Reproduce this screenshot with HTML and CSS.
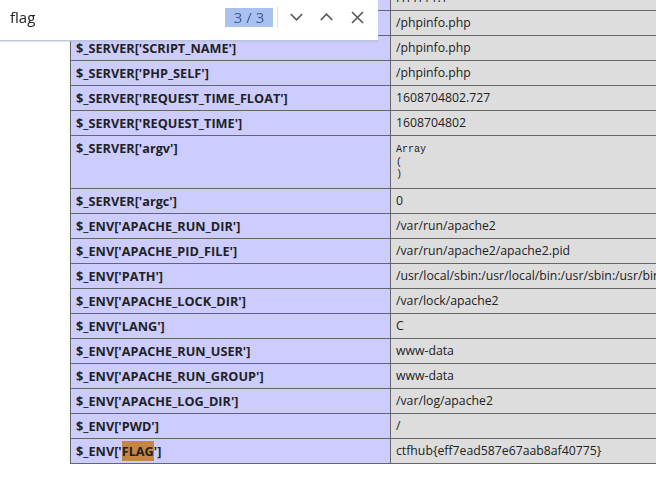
FILE: index.html
```html
<!DOCTYPE html>
<html>
<head>
<meta charset="utf-8">
<link rel="stylesheet" href="styles.css">
</head>
<body>
<div class="page">
  <table class="info">
    <tr><td class="e">$_SERVER['SERVER_PROTOCOL']</td><td class="v">HTTP/1.1</td></tr>
    <tr><td class="e">$_SERVER['REQUEST_URI']</td><td class="v">/phpinfo.php</td></tr>
    <tr><td class="e">$_SERVER['SCRIPT_NAME']</td><td class="v">/phpinfo.php</td></tr>
    <tr><td class="e">$_SERVER['PHP_SELF']</td><td class="v">/phpinfo.php</td></tr>
    <tr><td class="e">$_SERVER['REQUEST_TIME_FLOAT']</td><td class="v">1608704802.727</td></tr>
    <tr><td class="e">$_SERVER['REQUEST_TIME']</td><td class="v">1608704802</td></tr>
    <tr><td class="e">$_SERVER['argv']</td><td class="v"><pre class="dump">Array
(
)
</pre></td></tr>
    <tr><td class="e">$_SERVER['argc']</td><td class="v">0</td></tr>
    <tr><td class="e">$_ENV['APACHE_RUN_DIR']</td><td class="v">/var/run/apache2</td></tr>
    <tr><td class="e">$_ENV['APACHE_PID_FILE']</td><td class="v">/var/run/apache2/apache2.pid</td></tr>
    <tr><td class="e">$_ENV['PATH']</td><td class="v">/usr/local/sbin:/usr/local/bin:/usr/sbin:/usr/bin:/sbin:/bin</td></tr>
    <tr><td class="e">$_ENV['APACHE_LOCK_DIR']</td><td class="v">/var/lock/apache2</td></tr>
    <tr><td class="e">$_ENV['LANG']</td><td class="v">C</td></tr>
    <tr><td class="e">$_ENV['APACHE_RUN_USER']</td><td class="v">www-data</td></tr>
    <tr><td class="e">$_ENV['APACHE_RUN_GROUP']</td><td class="v">www-data</td></tr>
    <tr><td class="e">$_ENV['APACHE_LOG_DIR']</td><td class="v">/var/log/apache2</td></tr>
    <tr><td class="e">$_ENV['PWD']</td><td class="v">/</td></tr>
    <tr><td class="e">$_ENV['<mark class="hit">FLAG</mark>']</td><td class="v">ctfhub{eff7ead587e67aab8af40775}</td></tr>
  </table>
</div>

<div class="findbar">
  <span class="query">flag</span>
  <span class="count">3 / 3</span>
  <span class="sep"></span>
  <span class="btn btn-down">
    <svg width="13" height="8" viewBox="0 0 13 8"><path d="M0.8 1 L6.5 6.8 L12.2 1" fill="none" stroke="#555" stroke-width="1.6"/></svg>
  </span>
  <span class="btn btn-up">
    <svg width="13" height="8" viewBox="0 0 13 8"><path d="M0.8 7 L6.5 1.2 L12.2 7" fill="none" stroke="#555" stroke-width="1.6"/></svg>
  </span>
  <span class="btn btn-close">
    <svg width="13" height="13" viewBox="0 0 13 13"><path d="M1 1 L12 12 M12 1 L1 12" fill="none" stroke="#555" stroke-width="1.6"/></svg>
  </span>
</div>
</body>
</html>
```

FILE: styles.css
```css
html, body {
  margin: 0;
  padding: 0;
  overflow: hidden;
  background: #fff;
}
body {
  width: 656px;
  height: 479px;
  color: #222;
  font-family: "Open Sans", "Noto Sans", sans-serif;
}
.page {
  margin-top: -15px;
  padding-left: 70px;
  overflow: hidden;
}
.info {
  border-collapse: collapse;
  width: 934px;
  box-shadow: 1px 2px 3px #ccc;
}
.info td {
  border: 1px solid #666;
  font-size: 12.25px;
  line-height: 16px;
  padding: 4px 5px;
  vertical-align: top;
  white-space: nowrap;
}
.info td.e {
  background: #ccf;
  width: 309px;
  font-weight: bold;
  font-size: 12.7px;
}
.v {
  background: #ddd;
}
.dump {
  margin: 0;
  padding-top: 4px;
  padding-bottom: 2px;
  font-family: "Liberation Mono", monospace;
  font-size: 10px;
  line-height: 12.5px;
}
.hit {
  background: #c48646;
  color: #222;
  padding: 1px 0;
}
.findbar {
  position: fixed;
  left: 0;
  top: 0;
  width: 378px;
  height: 40px;
  background: #fff;
  box-shadow: 0 1px 0 #b9c6dd, 0 2px 1px rgba(170,185,215,0.35);
  display: flex;
  align-items: center;
  padding: 0 14px 0 10px;
  box-sizing: border-box;
}
.query {
  flex: 1;
  font-size: 15px;
  color: #222;
  margin-top: -6px;
}
.count {
  width: 48px;
  height: 19px;
  margin-top: -6px;
  background: #a9c1ee;
  color: #3d5b98;
  font-size: 15px;
  line-height: 19px;
  text-align: center;
}
.sep {
  width: 1px;
  height: 21px;
  margin: -6px 0 0 4px;
  background: #ddd;
}
.btn {
  display: flex;
  align-items: center;
  justify-content: center;
  width: 13px;
  height: 14px;
  margin-top: -6px;
}
.btn-down { margin-left: 12px; }
.btn-up { margin-left: 17px; }
.btn-close { margin-left: 18px; }
```
